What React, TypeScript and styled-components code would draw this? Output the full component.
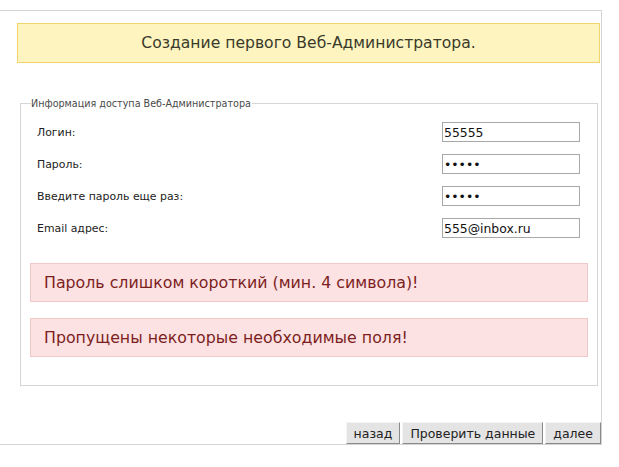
import React from 'react'
import styled, { createGlobalStyle } from 'styled-components'

const GlobalStyle = createGlobalStyle`
  body {
    margin: 0;
    background: #fff;
    font-family: 'DejaVu Sans', 'Liberation Sans', sans-serif;
  }
`

const fields = [
  { label: 'Логин:', value: '55555', type: 'text' },
  { label: 'Пароль:', value: '55555', type: 'password' },
  { label: 'Введите пароль еще раз:', value: '55555', type: 'password' },
  { label: 'Email адрес:', value: '555@inbox.ru', type: 'text' },
]

const errors = [
  'Пароль слишком короткий (мин. 4 символа)!',
  'Пропущены некоторые необходимые поля!',
]

const App = () => {
  return (
    <>
      <GlobalStyle />
      <Panel>
        <Header>Создание первого Веб-Администратора.</Header>
        <Group>
          <Legend>Информация доступа Веб-Администратора</Legend>
          <Rows>
            {fields.map((f) => (
              <Row key={f.label}>
                <Label>{f.label}</Label>
                <Input type={f.type} defaultValue={f.value} readOnly />
              </Row>
            ))}
          </Rows>
          <Alerts>
            {errors.map((e) => (
              <Alert key={e}>{e}</Alert>
            ))}
          </Alerts>
        </Group>
        <Buttons>
          <Button>назад</Button>
          <Button>Проверить данные</Button>
          <Button>далее</Button>
        </Buttons>
      </Panel>
    </>
  )
}

const Panel = styled.div`
  margin-top: 10px;
  width: 601px;
  border-top: 1px solid #d4d4d4;
  border-right: 1px solid #d4d4d4;
  border-bottom: 1px solid #d4d4d4;
  display: flex;
  flex-direction: column;
`

const Header = styled.div`
  margin: 12px 1px 0 17px;
  height: 38px;
  border: 1px solid #f0d66a;
  background: #fdf4c0;
  color: #3a3a2a;
  font-size: 15.6px;
  display: flex;
  align-items: center;
  justify-content: center;
`

const Group = styled.fieldset`
  margin: 34px 3px 0 20px;
  padding: 0 9px 28px 9px;
  border: 1px solid #d6d6d6;
  min-width: 0;
`

const Legend = styled.legend`
  padding: 0 1px 0 0;
  margin-left: 1px;
  font-size: 9.6px;
  line-height: 13px;
  color: #4a4a4a;
`

const Rows = styled.div`
  display: flex;
  flex-direction: column;
  gap: 12px;
  padding: 12px 8px 0 7px;
`

const Row = styled.div`
  display: flex;
  align-items: center;
  justify-content: space-between;
  height: 20px;
`

const Label = styled.span`
  font-size: 10.9px;
  color: #222;
`

const Input = styled.input`
  box-sizing: border-box;
  width: 138px;
  height: 20px;
  margin: 0;
  padding: 0 1px;
  border: 1px solid #a8a8a8;
  font-family: 'DejaVu Sans', sans-serif;
  font-size: 12.4px;
  color: #111;
  outline: none;
`

const Alerts = styled.div`
  display: flex;
  flex-direction: column;
  gap: 16px;
  margin-top: 25px;
`

const Alert = styled.div`
  height: 37px;
  border: 1px solid #f0c8c8;
  background: #fce2e2;
  color: #7c1e1e;
  font-size: 15.8px;
  display: flex;
  align-items: center;
  padding-left: 13px;
`

const Buttons = styled.div`
  display: flex;
  justify-content: flex-end;
  gap: 2px;
  margin: 36px 0 0 0;
`

const Button = styled.button`
  height: 22px;
  margin: 0;
  padding: 0 7px;
  background: #e4e4e4;
  border: 1px solid;
  border-color: #f4f4f4 #8a8a8a #8a8a8a #f4f4f4;
  font-family: 'DejaVu Sans', sans-serif;
  font-size: 12.5px;
  color: #222;
  cursor: pointer;
`

export default App
